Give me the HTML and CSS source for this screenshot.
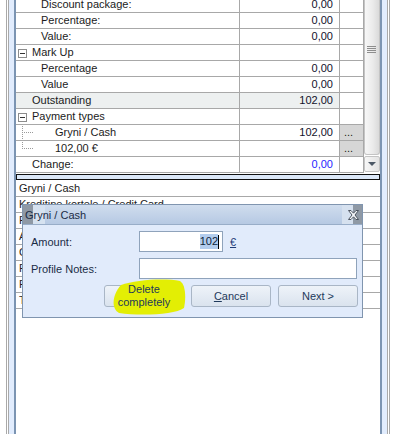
FILE: index.html
```html
<!DOCTYPE html>
<html lang="en">
<head>
    <meta charset="UTF-8">
    <title>Payment</title>
    <link rel="stylesheet" href="styles.css">
</head>
<body>
    <div class="window">
        <div class="frame-left"></div>
        <div class="main">
            <div class="grid-area">
                <div class="grid">
                    <div class="row"><div class="cell name lvl1">Discount package:</div><div class="cell val">0,00</div><div class="cell more"></div></div>
                    <div class="row"><div class="cell name lvl1">Percentage:</div><div class="cell val">0,00</div><div class="cell more"></div></div>
                    <div class="row"><div class="cell name lvl1">Value:</div><div class="cell val">0,00</div><div class="cell more"></div></div>
                    <div class="row"><div class="cell name lvl0"><span class="exp"></span>Mark Up</div><div class="cell val"></div><div class="cell more"></div></div>
                    <div class="row"><div class="cell name lvl1">Percentage</div><div class="cell val">0,00</div><div class="cell more"></div></div>
                    <div class="row"><div class="cell name lvl1">Value</div><div class="cell val">0,00</div><div class="cell more"></div></div>
                    <div class="row total"><div class="cell name lvl0">Outstanding</div><div class="cell val">102,00</div><div class="cell more"></div></div>
                    <div class="row"><div class="cell name lvl0"><span class="exp"></span>Payment types</div><div class="cell val"></div><div class="cell more"></div></div>
                    <div class="row"><div class="cell name lvl2 branch">Gryni / Cash</div><div class="cell val">102,00</div><div class="cell more on">...</div></div>
                    <div class="row"><div class="cell name lvl2 branch last">102,00 €</div><div class="cell val"></div><div class="cell more on">...</div></div>
                    <div class="row"><div class="cell name lvl0">Change:</div><div class="cell val blue">0,00</div><div class="cell more"></div></div>
                </div>
                <div class="scrollbar">
                    <div class="thumb"><span class="grip"></span></div>
                    <div class="arrow"></div>
                </div>
            </div>

            <div class="splitter"></div>

            <div class="list">
                <div class="list-row">Gryni / Cash</div>
                <div class="list-row">Kreditine kortele / Credit Card</div>
                <div class="list-row">Pavedimas / Transfer</div>
                <div class="list-row">Avansas / Advance</div>
                <div class="list-row">Gift Card</div>
                <div class="list-row">Prepayment</div>
                <div class="list-row">Points</div>
                <div class="list-row">Talonas / Voucher</div>
            </div>

            <div class="dialog">
                <div class="dlg-title">
                    Gryni / Cash
                    <span class="dlg-close">
                        <svg width="11" height="10" viewBox="0 0 11 10"><polygon points="0.5,0.5 3,0.5 5.5,3.2 8,0.5 10.5,0.5 7,5 10.5,9.5 8,9.5 5.5,6.8 3,9.5 0.5,9.5 4,5" fill="#f5f7fa" stroke="#4d5560" stroke-width="1"/></svg>
                    </span>
                </div>
                <div class="dlg-body">
                    <div class="field">
                        <label>Amount:</label>
                        <div class="edit amount"><span class="sel">102</span><span class="caret"></span></div>
                        <span class="currency">€</span>
                    </div>
                    <div class="field">
                        <label>Profile Notes:</label>
                        <div class="edit notes"></div>
                    </div>
                    <div class="buttons">
                        <button class="btn delete"><span class="btn-text">Delete completely</span></button>
                        <button class="btn"><span class="btn-text"><u>C</u>ancel</span></button>
                        <button class="btn"><span class="btn-text">Next &gt;</span></button>
                    </div>
                </div>
                <svg class="marker" width="78" height="38" viewBox="0 0 78 38">
                    <path d="M12 6 C 26 1, 55 -1, 71 2 C 77 6, 77 20, 75 29 C 66 36, 30 37, 10 34 C 2 30, 3 16, 12 6 Z" fill="#e3ee04"/>
                </svg>
            </div>
        </div>
        <div class="frame-right"></div>
    </div>
</body>
</html>
```

FILE: styles.css
```css
* {
    box-sizing: border-box;
}
body {
    margin: 0;
    width: 417px;
    height: 434px;
    overflow: hidden;
    background: #fff;
    font-family: "Liberation Sans", Arial, sans-serif;
    font-size: 11px;
    color: #1b1b1b;
}
.window {
    display: flex;
    height: 434px;
}
.frame-left {
    width: 16px;
    background: linear-gradient(to right, #fff 0 6px, #a9a9a9 6px 7px, #fff 7px 8px, #a9a9a9 8px 9px, #e1ecfd 9px 14px, #7b94b2 14px 16px);
}
.frame-right {
    width: 10px;
    background: linear-gradient(to right, #7b94b2 0 2px, #e1ecfd 2px 7px, #a9a9a9 7px 8px, #fff 8px 9px, #a9a9a9 9px 10px);
}
.main {
    position: relative;
    width: 364px;
}

/* property grid */
.grid-area {
    display: flex;
    margin-top: -3px;
}
.grid {
    width: 348px;
}
.row {
    display: grid;
    grid-template-columns: 224px 100px 24px;
    height: 16px;
    line-height: 15px;
    border-bottom: 1px solid #a8a8a8;
}
.cell {
    position: relative;
    border-right: 1px solid #a8a8a8;
    white-space: nowrap;
    overflow: hidden;
}
.lvl0 { padding-left: 16px; }
.lvl1 { padding-left: 25px; }
.lvl2 { padding-left: 39px; }
.val {
    text-align: right;
    padding-right: 6px;
    color: #12122a;
}
.val.blue {
    color: #1f1fff;
}
.total .name,
.total .val {
    background: #edf0f0;
}
.more.on {
    background: #d6d6d6;
    padding-left: 4px;
}
.exp {
    position: absolute;
    left: 2px;
    top: 4px;
    width: 9px;
    height: 9px;
    border: 1px solid #8c8c8c;
    background: #fff;
}
.exp::after {
    content: "";
    position: absolute;
    left: 1px;
    top: 3px;
    width: 5px;
    height: 1px;
    background: #333;
}
.branch::before {
    content: "";
    position: absolute;
    left: 6px;
    top: -2px;
    height: 18px;
    border-left: 1px dotted #9a9a9a;
}
.branch.last::before {
    height: 10px;
}
.branch::after {
    content: "";
    position: absolute;
    left: 6px;
    top: 7px;
    width: 11px;
    border-top: 1px dotted #9a9a9a;
}

/* scrollbar */
.scrollbar {
    width: 16px;
}
.thumb {
    position: relative;
    height: 158px;
    border: 1px solid #c4c4c4;
    border-top: none;
    border-radius: 0 0 3px 3px;
    background: linear-gradient(to right, #f7f7f7, #ebebeb 55%, #dadada);
}
.grip {
    position: absolute;
    left: 2px;
    top: 49px;
    width: 9px;
    height: 7px;
    background: repeating-linear-gradient(#8d8d8d 0 1px, transparent 1px 2px);
}
.arrow {
    margin-top: 1px;
    height: 16px;
    border: 1px solid #c4c4c4;
    border-radius: 2px;
    background: linear-gradient(to right, #f7f7f7, #e3e3e3);
    display: flex;
    align-items: center;
    justify-content: center;
}
.arrow::before {
    content: "";
    border-left: 4px solid transparent;
    border-right: 4px solid transparent;
    border-top: 4px solid #4c5866;
}

.splitter {
    margin-top: 1px;
    height: 6px;
    border: 1px solid #111;
    background: #dce8f8;
}

/* list under splitter */
.list {
    margin-top: 1px;
}
.list-row {
    height: 16px;
    line-height: 15px;
    padding-left: 3px;
    border-bottom: 1px solid #a8a8a8;
    white-space: nowrap;
}

/* dialog */
.dialog {
    position: absolute;
    left: 6px;
    top: 204px;
    width: 341px;
    height: 114px;
    border: 1px solid #8095af;
    background: #e1ebfb;
    color: #1a2c46;
}
.dlg-title {
    position: relative;
    height: 20px;
    padding: 2px 0 0 2px;
    line-height: 16px;
    border-bottom: 1px solid #98adc8;
    background:
        linear-gradient(to right, #8f99a5 0 10px, #d6e2f0 10px 22px, transparent 22px),
        linear-gradient(#d0ddee, #b6c9e3);
}
.dlg-close {
    position: absolute;
    right: 0;
    top: 0;
    width: 20px;
    height: 19px;
    display: flex;
    align-items: center;
    justify-content: center;
    padding-left: 2px;
    background: linear-gradient(to right, #d6e1ef 0 11px, #8f99a5 11px);
}
.dlg-body {
    padding: 6px 4px 0 8px;
}
.field {
    display: flex;
    align-items: center;
    height: 21px;
    margin-bottom: 6px;
}
.field label {
    width: 108px;
}
.edit {
    height: 21px;
    border: 1px solid #8fa3bb;
    background: #fff;
}
.edit.amount {
    width: 84px;
    display: flex;
    justify-content: flex-end;
    align-items: center;
    padding-right: 3px;
    color: #0d1f3a;
}
.sel {
    background: #b3cdee;
    line-height: 15px;
}
.caret {
    width: 1px;
    height: 14px;
    background: #000;
}
.currency {
    margin-left: 7px;
    text-decoration: underline;
    color: #1f3c78;
}
.edit.notes {
    width: 218px;
}
.buttons {
    display: flex;
    justify-content: flex-end;
    gap: 7px;
}
.btn {
    width: 80px;
    height: 22px;
    padding: 0 4px;
    border: 1px solid #a9b6c6;
    border-radius: 3px;
    background: linear-gradient(#eef3f9, #dae3ee);
    font: inherit;
    color: #1e395b;
    line-height: 13px;
    display: flex;
    align-items: center;
    justify-content: center;
}
.btn-text {
    position: relative;
    z-index: 2;
    text-align: center;
}
.marker {
    position: absolute;
    left: 86px;
    top: 74px;
    z-index: 1;
}
```
